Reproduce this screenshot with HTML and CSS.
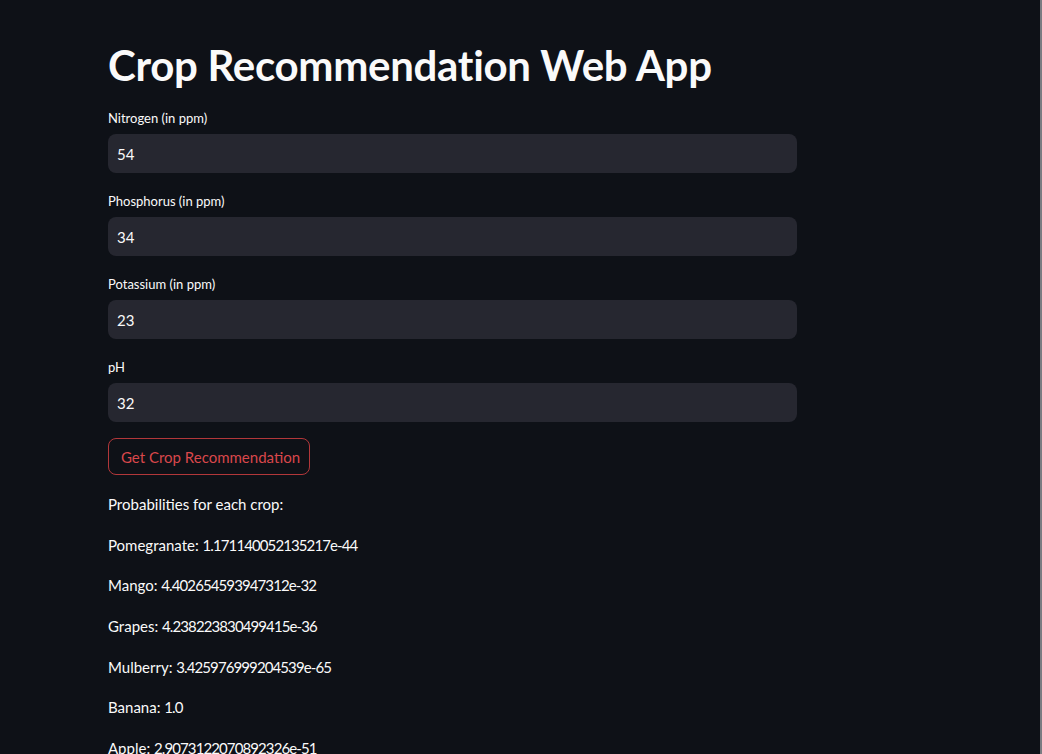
FILE: index.html
```html
<!DOCTYPE html>
<html lang="en">
<head>
<meta charset="utf-8">
<title>Crop Recommendation Web App</title>
<link rel="stylesheet" href="styles.css">
</head>
<body>
<main class="app">
  <div class="block">
    <h1 class="title">Crop Recommendation Web App</h1>
    <div class="field">
      <label class="label">Nitrogen (in ppm)</label>
      <div class="input">54</div>
    </div>
    <div class="field">
      <label class="label">Phosphorus (in ppm)</label>
      <div class="input">34</div>
    </div>
    <div class="field">
      <label class="label">Potassium (in ppm)</label>
      <div class="input">23</div>
    </div>
    <div class="field">
      <label class="label">pH</label>
      <div class="input">32</div>
    </div>
    <button class="btn">Get Crop Recommendation</button>
    <div class="results">
      <p>Probabilities for each crop:</p>
      <p>Pomegranate: <span class="num">1.171140052135217e-44</span></p>
      <p>Mango: <span class="num">4.402654593947312e-32</span></p>
      <p>Grapes: <span class="num">4.238223830499415e-36</span></p>
      <p>Mulberry: <span class="num">3.425976999204539e-65</span></p>
      <p>Banana: <span class="num">1.0</span></p>
      <p>Apple: <span class="num">2.9073122070892326e-51</span></p>
    </div>
  </div>
</main>
</body>
</html>
```

FILE: styles.css
```css
html, body {
  margin: 0;
  padding: 0;
  height: 100%;
  overflow: hidden;
}
body {
  background: #0e1117;
  color: #fafafa;
  font-family: Lato, "Noto Sans", sans-serif;
  border-right: 2px solid #7a7c82;
  box-sizing: border-box;
}
.app {
  padding: 0 0 0 108px;
}
.block {
  width: 689px;
  display: flex;
  flex-direction: column;
}
.title {
  margin: 0;
  padding-top: 37px;
  height: 73px;
  font-size: 42px;
  font-weight: 700;
  line-height: 56px;
  letter-spacing: -0.3px;
  color: #fafafa;
}
.field {
  display: flex;
  flex-direction: column;
  margin-bottom: 20px;
}
.label {
  font-size: 13px;
  line-height: 16px;
  height: 16px;
  margin-bottom: 8px;
  color: #fafafa;
}
.input {
  height: 39px;
  background: #262730;
  border-radius: 8px;
  padding: 0 9px;
  display: flex;
  align-items: center;
  font-size: 15px;
  color: #fafafa;
}
.btn {
  align-self: flex-start;
  margin-top: -4px;
  height: 37px;
  width: 202px;
  background: transparent;
  border: 1px solid #b2373a;
  border-radius: 8px;
  color: #d9474b;
  font-family: inherit;
  font-size: 15px;
  padding: 0 12px;
  text-align: left;
  white-space: nowrap;
}
.results {
  margin-top: 18px;
}
.results p {
  margin: 0;
  height: 40.7px;
  line-height: 22px;
  font-size: 15px;
  color: #fafafa;
}
.num {
  letter-spacing: -0.9px;
}
```
